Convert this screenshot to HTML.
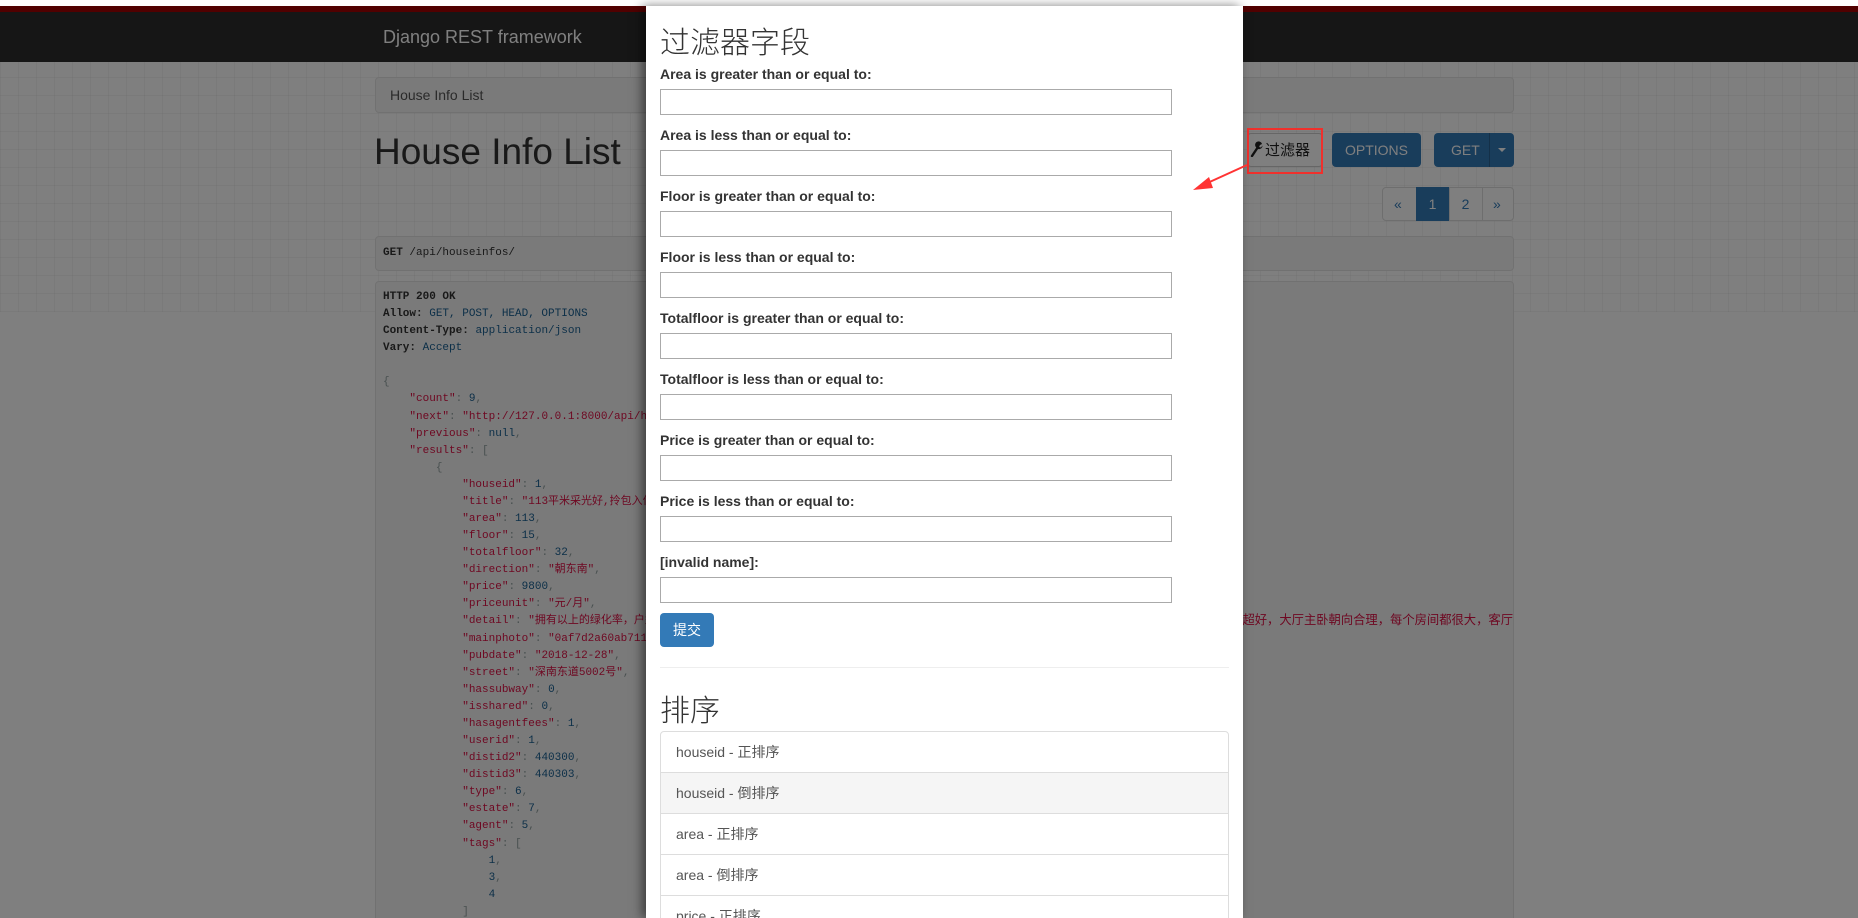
<!DOCTYPE html>
<html style="overflow:hidden;height:918px"><head><meta charset="utf-8"><style>
*{margin:0;padding:0;box-sizing:border-box}
html,body{overflow:hidden}
body{width:1858px;height:918px;overflow:hidden;position:relative;background:#fff;font-family:"Liberation Sans","Noto Sans CJK SC",sans-serif}
.a{position:absolute}
.grid{left:0;top:62px;width:1858px;height:250px;background-image:repeating-linear-gradient(0deg,rgba(0,0,0,.04) 0 1px,transparent 1px 18px),repeating-linear-gradient(90deg,rgba(0,0,0,.04) 0 1px,transparent 1px 18px)}
.box{background:#f5f5f5;border:1px solid #e3e3e3;border-radius:4px}
pre{font-family:"Liberation Mono","Noto Sans CJK SC",monospace;font-size:11px;line-height:17.08px;color:#333;white-space:pre}
.k{color:#d14}.n{color:#195f91}.p{color:#93a1a1}.h{color:#333;font-weight:bold}.v{color:#195f91}
.btn{background:#337ab7;color:#fff;border-radius:4px;font-size:14px;display:flex;align-items:center;justify-content:center}
.ov{left:0;top:0;width:1858px;height:918px;background:rgba(0,0,0,.5)}
.modal{left:646px;top:6px;width:597px;height:912px;background:#fff;box-shadow:-4px 0 10px rgba(0,0,0,.5);overflow:hidden}
.lab{position:absolute;left:14px;font-size:14px;font-weight:bold;color:#333;line-height:16px}
.inp{position:absolute;left:14px;width:512px;height:26px;border:1px solid #aaa}
.li{position:absolute;left:14px;width:569px;height:42px;border:1px solid #ddd;font-size:14px;color:#555;padding-left:15px;line-height:40px}
</style></head><body>
<div class="a" style="left:0;top:6px;width:1858px;height:6px;background:#a30000"></div>
<div class="a" style="left:0;top:12px;width:1858px;height:50px;background:#2c2c2c"></div>
<div class="a" style="left:383px;top:27px;font-size:18px;color:#fff">Django REST framework</div>
<div class="a grid"></div>
<div class="a box" style="left:375px;top:77px;width:1139px;height:36px"></div>
<div class="a" style="left:390px;top:87px;font-size:14px;color:#555">House Info List</div>
<div class="a" style="left:374px;top:131px;font-size:37px;color:#333">House Info List</div>
<div class="a" style="left:1247px;top:133px;width:76px;height:34px;border:1px solid #ccc;border-radius:4px;background:#fff"></div>
<svg class="a" style="left:1250px;top:141px" width="14" height="16" viewBox="0 0 14 16"><path d="M2 15 L8 6" stroke="#222" stroke-width="2.4" stroke-linecap="round"/><path d="M7 7 A3.5 3.5 0 1 1 12 3 L10 4 L9 6 L11 6.5 L12.5 4.5 A3.5 3.5 0 0 1 8 8 Z" fill="#222"/></svg>
<div class="a" style="left:1265px;top:139px;font-size:15px;color:#222;font-family:'Noto Sans CJK SC',sans-serif">过滤器</div>
<div class="a btn" style="left:1332px;top:133px;width:89px;height:34px">OPTIONS</div>
<div class="a btn" style="left:1434px;top:133px;width:80px;height:34px;justify-content:flex-start;padding-left:17px">GET</div>
<div class="a" style="left:1489px;top:133px;width:1px;height:34px;background:#286090"></div>
<div class="a" style="left:1498px;top:148px;width:0;height:0;border-left:4px solid transparent;border-right:4px solid transparent;border-top:4px solid #fff"></div>
<div class="a" style="left:1382px;top:187px;width:132px;height:34px;border:1px solid #ddd;border-radius:4px;background:#fff;font-size:14px;color:#337ab7">
<span class="a" style="left:11px;top:8px">«</span>
<span class="a" style="left:33px;top:-1px;width:33px;height:34px;background:#337ab7;color:#fff;text-align:center;line-height:34px">1</span>
<span class="a" style="left:66px;top:0;width:1px;height:32px;background:#ddd"></span>
<span class="a" style="left:66px;top:8px;width:33px;text-align:center">2</span>
<span class="a" style="left:99px;top:0;width:1px;height:32px;background:#ddd"></span>
<span class="a" style="left:110px;top:8px">»</span></div>
<div class="a box" style="left:375px;top:236px;width:1139px;height:35px"></div>
<pre class="a" style="left:383px;top:245px"><b>GET</b> /api/houseinfos/</pre>
<div class="a box" style="left:375px;top:281px;width:1139px;height:650px;overflow:hidden">
<pre class="a" style="left:7px;top:7px"><span class="h">HTTP 200 OK</span>
<span class="h">Allow:</span> <span class="v">GET, POST, HEAD, OPTIONS</span>
<span class="h">Content-Type:</span> <span class="v">application/json</span>
<span class="h">Vary:</span> <span class="v">Accept</span>

<span class="p">{</span>
    <span class="k">"count"</span><span class="p">:</span> <span class="n">9</span><span class="p">,</span>
    <span class="k">"next"</span><span class="p">:</span> <span class="k">"http://127.0.0.1:8000/api/houseinfos/?page=2"</span><span class="p">,</span>
    <span class="k">"previous"</span><span class="p">:</span> <span class="n">null</span><span class="p">,</span>
    <span class="k">"results"</span><span class="p">: [</span>
        <span class="p">{</span>
            <span class="k">"houseid"</span><span class="p">:</span> <span class="n">1</span><span class="p">,</span>
            <span class="k">"title"</span><span class="p">:</span> <span class="k">"113平米采光好,拎包入住"</span><span class="p">,</span>
            <span class="k">"area"</span><span class="p">:</span> <span class="n">113</span><span class="p">,</span>
            <span class="k">"floor"</span><span class="p">:</span> <span class="n">15</span><span class="p">,</span>
            <span class="k">"totalfloor"</span><span class="p">:</span> <span class="n">32</span><span class="p">,</span>
            <span class="k">"direction"</span><span class="p">:</span> <span class="k">"朝东南"</span><span class="p">,</span>
            <span class="k">"price"</span><span class="p">:</span> <span class="n">9800</span><span class="p">,</span>
            <span class="k">"priceunit"</span><span class="p">:</span> <span class="k">"元/月"</span><span class="p">,</span>
            <span class="k">"detail"</span><span class="p">:</span> <span class="k">"拥有以上的绿化率，户型"</span>
            <span class="k">"mainphoto"</span><span class="p">:</span> <span class="k">"0af7d2a60ab711e9"</span><span class="p">,</span>
            <span class="k">"pubdate"</span><span class="p">:</span> <span class="k">"2018-12-28"</span><span class="p">,</span>
            <span class="k">"street"</span><span class="p">:</span> <span class="k">"深南东道5002号"</span><span class="p">,</span>
            <span class="k">"hassubway"</span><span class="p">:</span> <span class="n">0</span><span class="p">,</span>
            <span class="k">"isshared"</span><span class="p">:</span> <span class="n">0</span><span class="p">,</span>
            <span class="k">"hasagentfees"</span><span class="p">:</span> <span class="n">1</span><span class="p">,</span>
            <span class="k">"userid"</span><span class="p">:</span> <span class="n">1</span><span class="p">,</span>
            <span class="k">"distid2"</span><span class="p">:</span> <span class="n">440300</span><span class="p">,</span>
            <span class="k">"distid3"</span><span class="p">:</span> <span class="n">440303</span><span class="p">,</span>
            <span class="k">"type"</span><span class="p">:</span> <span class="n">6</span><span class="p">,</span>
            <span class="k">"estate"</span><span class="p">:</span> <span class="n">7</span><span class="p">,</span>
            <span class="k">"agent"</span><span class="p">:</span> <span class="n">5</span><span class="p">,</span>
            <span class="k">"tags"</span><span class="p">: [</span>
                <span class="n">1</span><span class="p">,</span>
                <span class="n">3</span><span class="p">,</span>
                <span class="n">4</span>
            <span class="p">]</span></pre>
<pre class="a k" style="right:0;top:331px;font-size:12.3px">型超好，大厅主卧朝向合理，每个房间都很大，客厅</pre>
</div>
<div class="a ov"></div>
<div class="a" style="left:1247px;top:128px;width:76px;height:46px;border:2px solid #f0302c"></div>
<div class="a" style="left:0;top:0;width:1858px;height:6px;background:#fff"></div>
<div class="a modal">
<div class="a" style="left:14px;top:12px;font-size:30px;color:#333;font-family:'Noto Sans CJK SC',sans-serif;font-weight:300">过滤器字段</div>
<div class="lab" style="top:60px">Area is greater than or equal to:</div><div class="inp" style="top:83px"></div>
<div class="lab" style="top:121px">Area is less than or equal to:</div><div class="inp" style="top:144px"></div>
<div class="lab" style="top:182px">Floor is greater than or equal to:</div><div class="inp" style="top:205px"></div>
<div class="lab" style="top:243px">Floor is less than or equal to:</div><div class="inp" style="top:266px"></div>
<div class="lab" style="top:304px">Totalfloor is greater than or equal to:</div><div class="inp" style="top:327px"></div>
<div class="lab" style="top:365px">Totalfloor is less than or equal to:</div><div class="inp" style="top:388px"></div>
<div class="lab" style="top:426px">Price is greater than or equal to:</div><div class="inp" style="top:449px"></div>
<div class="lab" style="top:487px">Price is less than or equal to:</div><div class="inp" style="top:510px"></div>
<div class="lab" style="top:548px">[invalid name]:</div><div class="inp" style="top:571px"></div>
<div class="a btn" style="left:14px;top:607px;width:54px;height:34px;font-family:'Noto Sans CJK SC',sans-serif">提交</div>
<div class="a" style="left:14px;top:661px;width:569px;height:1px;background:#eee"></div>
<div class="a" style="left:14px;top:680px;font-size:30px;color:#333;font-family:'Noto Sans CJK SC',sans-serif;font-weight:300">排序</div>
<div class="li" style="top:725px;border-radius:4px 4px 0 0">houseid - 正排序</div>
<div class="li" style="top:766px;background:#f5f5f5">houseid - 倒排序</div>
<div class="li" style="top:807px">area - 正排序</div>
<div class="li" style="top:848px">area - 倒排序</div>
<div class="li" style="top:889px">price - 正排序</div>
</div>
<svg class="a" style="left:1185px;top:160px" width="70" height="40"><line x1="62" y1="5" x2="18" y2="25" stroke="#f33" stroke-width="2"/><polygon points="8,30 24,17 28,28" fill="#f33"/></svg>
</body></html>
